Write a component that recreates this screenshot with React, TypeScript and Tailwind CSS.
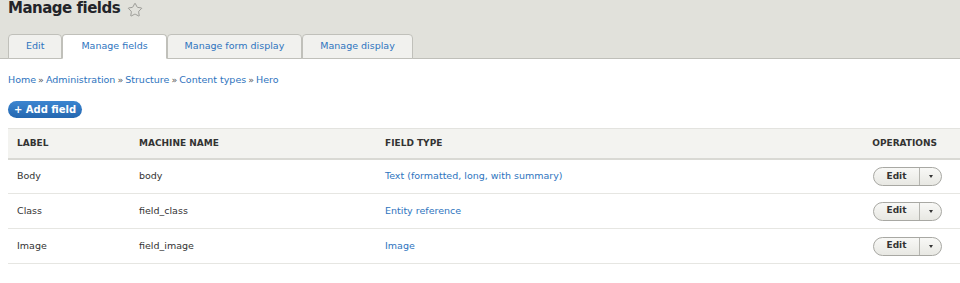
import { Star } from 'lucide-react';

const font = { fontFamily: '"DejaVu Sans", "Liberation Sans", sans-serif' };

const tabs = ['Edit', 'Manage fields', 'Manage form display', 'Manage display'];

const rows = [
  { label: 'Body', machine: 'body', type: 'Text (formatted, long, with summary)' },
  { label: 'Class', machine: 'field_class', type: 'Entity reference' },
  { label: 'Image', machine: 'field_image', type: 'Image' },
];

function OpsButton() {
  return (
    <div className="flex h-[19px] items-stretch rounded-full border border-[#a8a8a3] bg-gradient-to-b from-[#f8f8f6] to-[#e8e8e3] text-[9px] font-bold text-[#333]">
      <span className="flex w-[45px] items-center justify-center">Edit</span>
      <span className="flex w-[22px] items-center justify-center border-l border-[#b5b5b0]">
        <span className="h-0 w-0 border-x-[2.5px] border-t-[3px] border-x-transparent border-t-[#333]" />
      </span>
    </div>
  );
}

function App() {
  return (
    <div className="min-h-screen w-[960px] overflow-hidden bg-white" style={font}>
      <div className="border-b border-[#bfbfb9] bg-[#e1e1db] px-2">
        <div className="flex h-[34px] items-start gap-[7px]">
          <h1 className="-mt-[1px] text-[15px] font-bold leading-[18px] tracking-[-0.5px] text-[#232429]">
            Manage fields
          </h1>
          <Star size={16} strokeWidth={1.2} className="mt-[2px] text-[#8a8a86]" />
        </div>
        <div className="flex">
          {tabs.map((t) => (
            <div
              key={t}
              className={`-mb-px flex h-[25px] items-center rounded-t-[4px] border border-[#c0c0ba] px-[17px] text-[9.5px] text-[#2e74be] ${
                t === 'Manage fields' ? 'border-b-white bg-white px-[18px]' : 'bg-[#f1f1ee]'
              }`}
            >
              {t}
            </div>
          ))}
        </div>
      </div>

      <div className="px-2">
        <div className="mt-[14px] flex gap-[2px] text-[9.5px] leading-[14px] text-[#2e74be]">
          <span>Home</span>
          <span className="text-[#555]">»</span>
          <span>Administration</span>
          <span className="text-[#555]">»</span>
          <span>Structure</span>
          <span className="text-[#555]">»</span>
          <span>Content types</span>
          <span className="text-[#555]">»</span>
          <span>Hero</span>
        </div>

        <button className="mt-[14px] flex h-[17px] w-[74px] items-center justify-center rounded-full bg-gradient-to-b from-[#3c85d0] to-[#2367b0] text-[10px] font-bold text-white">
          + Add field
        </button>

        <table className="mt-[10px] w-[960px] border-collapse text-[9.5px] text-[#333]">
          <thead>
            <tr className="h-[30px] border-t border-b-2 border-t-[#e3e3df] border-b-[#d9d9d4] bg-[#f3f3f0] text-left text-[9px] font-bold uppercase text-[#333]">
              <th className="w-[130px] pl-[9px]">Label</th>
              <th className="w-[246px] pl-[1px]">Machine name</th>
              <th className="pl-[1px]">Field type</th>
              <th className="w-[300px] pr-[31px] text-right">Operations</th>
            </tr>
          </thead>
          <tbody>
            {rows.map((r) => (
              <tr key={r.label} className="h-[35px] border-b border-[#e6e6e2]">
                <td className="pl-[9px]">{r.label}</td>
                <td className="pl-[1px]">{r.machine}</td>
                <td className="pl-[1px] text-[#2e74be]">{r.type}</td>
                <td className="pr-[26px]">
                  <div className="flex justify-end">
                    <OpsButton />
                  </div>
                </td>
              </tr>
            ))}
          </tbody>
        </table>
      </div>
    </div>
  );
}

export default App;
